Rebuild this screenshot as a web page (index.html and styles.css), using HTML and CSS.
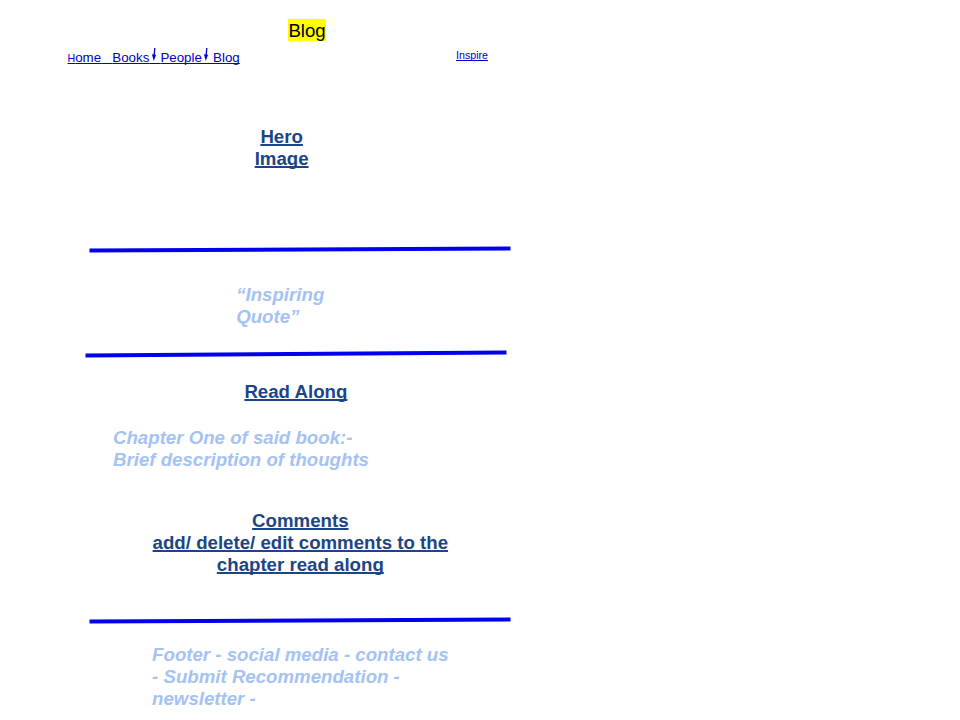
FILE: index.html
```html
<!DOCTYPE html>
<html lang="en">
<head>
<meta charset="utf-8">
<title>Blog</title>
<link rel="stylesheet" href="styles.css">
</head>
<body>
<main class="page">
  <h1 class="title"><mark>Blog</mark></h1>
  <nav class="nav">
    <div class="links"><a><small>H</small>ome</a>&nbsp;&nbsp; <a>Books</a><span class="drop">&nbsp;&nbsp; <svg class="arrow" viewBox="0 0 12 16"><path class="stem" d="M5.8 1L5.2 8"/><path class="tip" d="M2.9 7.3L7.1 7.8L4.8 14Z"/></svg></span><a>People</a><span class="drop">&nbsp;&nbsp; <svg class="arrow" viewBox="0 0 12 16"><path class="stem" d="M5.8 1L5.2 8"/><path class="tip" d="M2.9 7.3L7.1 7.8L4.8 14Z"/></svg></span><a>Blog</a></div>
    <a class="inspire">Inspire</a>
  </nav>
  <h2 class="heading hero">Hero<br>Image</h2>
  <svg class="rule rule-one" viewBox="0 0 430 8"><path d="M4.5 5.5L425.5 3.5"/></svg>
  <p class="note quote">“Inspiring<br>Quote”</p>
  <svg class="rule rule-two" viewBox="0 0 430 8"><path d="M.5 5.5L421.5 2.5"/></svg>
  <h2 class="heading read">Read Along</h2>
  <p class="note chapter">Chapter One of said book:-<br>Brief description of thoughts</p>
  <h2 class="heading comments">Comments<br>add/ delete/ edit comments to the<br>chapter read along</h2>
  <svg class="rule rule-three" viewBox="0 0 430 8"><path d="M4.5 5.5L425.5 3.5"/></svg>
  <footer class="note footer">Footer - social media - contact us<br>- Submit Recommendation -<br>newsletter -</footer>
</main>
</body>
</html>
```
FILE: styles.css
```css
* { box-sizing: border-box; margin: 0; padding: 0; }
body { background: #fff; font-family: "Liberation Sans", Arial, sans-serif; }
.page { width: 600px; height: 720px; padding-top: 19px; overflow: hidden; display: flex; flex-direction: column; align-items: flex-start; }
.title { margin-left: 288.4px; height: 22px; font-size: 18.67px; line-height: 23px; font-weight: 400; }
.title mark { display: block; height: 22px; background: #ff0; color: #000; }
.nav { display: flex; width: 488px; height: 20px; margin-top: 6px; padding-left: 67.5px; justify-content: space-between; color: #00c; font-size: 13.33px; line-height: 22px; }
.links, .inspire { text-decoration: underline; text-decoration-skip-ink: none; white-space: pre; }
.links small { font-size: 10.67px; }
.drop { position: relative; }
.arrow { position: absolute; left: -0.5px; top: -3.5px; width: 12px; height: 16px; }
.stem { stroke: #00c; stroke-width: 1.3; }
.tip { fill: #00c; }
.nav .inspire { font-size: 10.67px; line-height: 17px; }
.heading { color: #1c4587; font-size: 18.67px; line-height: 22px; text-align: center; text-decoration: underline; text-decoration-thickness: 1.5px; text-decoration-skip-ink: none; }
.hero { margin: 59px 0 0 254.7px; }
.rule { display: block; width: 430px; height: 8px; flex: none; margin-left: 85px; }
.rule path { stroke: #00e; stroke-width: 4; fill: none; }
.rule-one { margin-top: 75px; }
.note { color: #a4c2f4; font-size: 18.67px; line-height: 22px; font-weight: 700; font-style: italic; }
.quote { margin: 31px 0 0 236.2px; }
.rule-two { margin-top: 22px; }
.read { margin: 23px 0 0 244.4px; }
.chapter { margin: 24px 0 0 113px; }
.comments { margin: 39px 0 0 152.6px; }
.rule-three { margin-top: 40px; }
.footer { margin: 20px 0 0 152.1px; }
```
